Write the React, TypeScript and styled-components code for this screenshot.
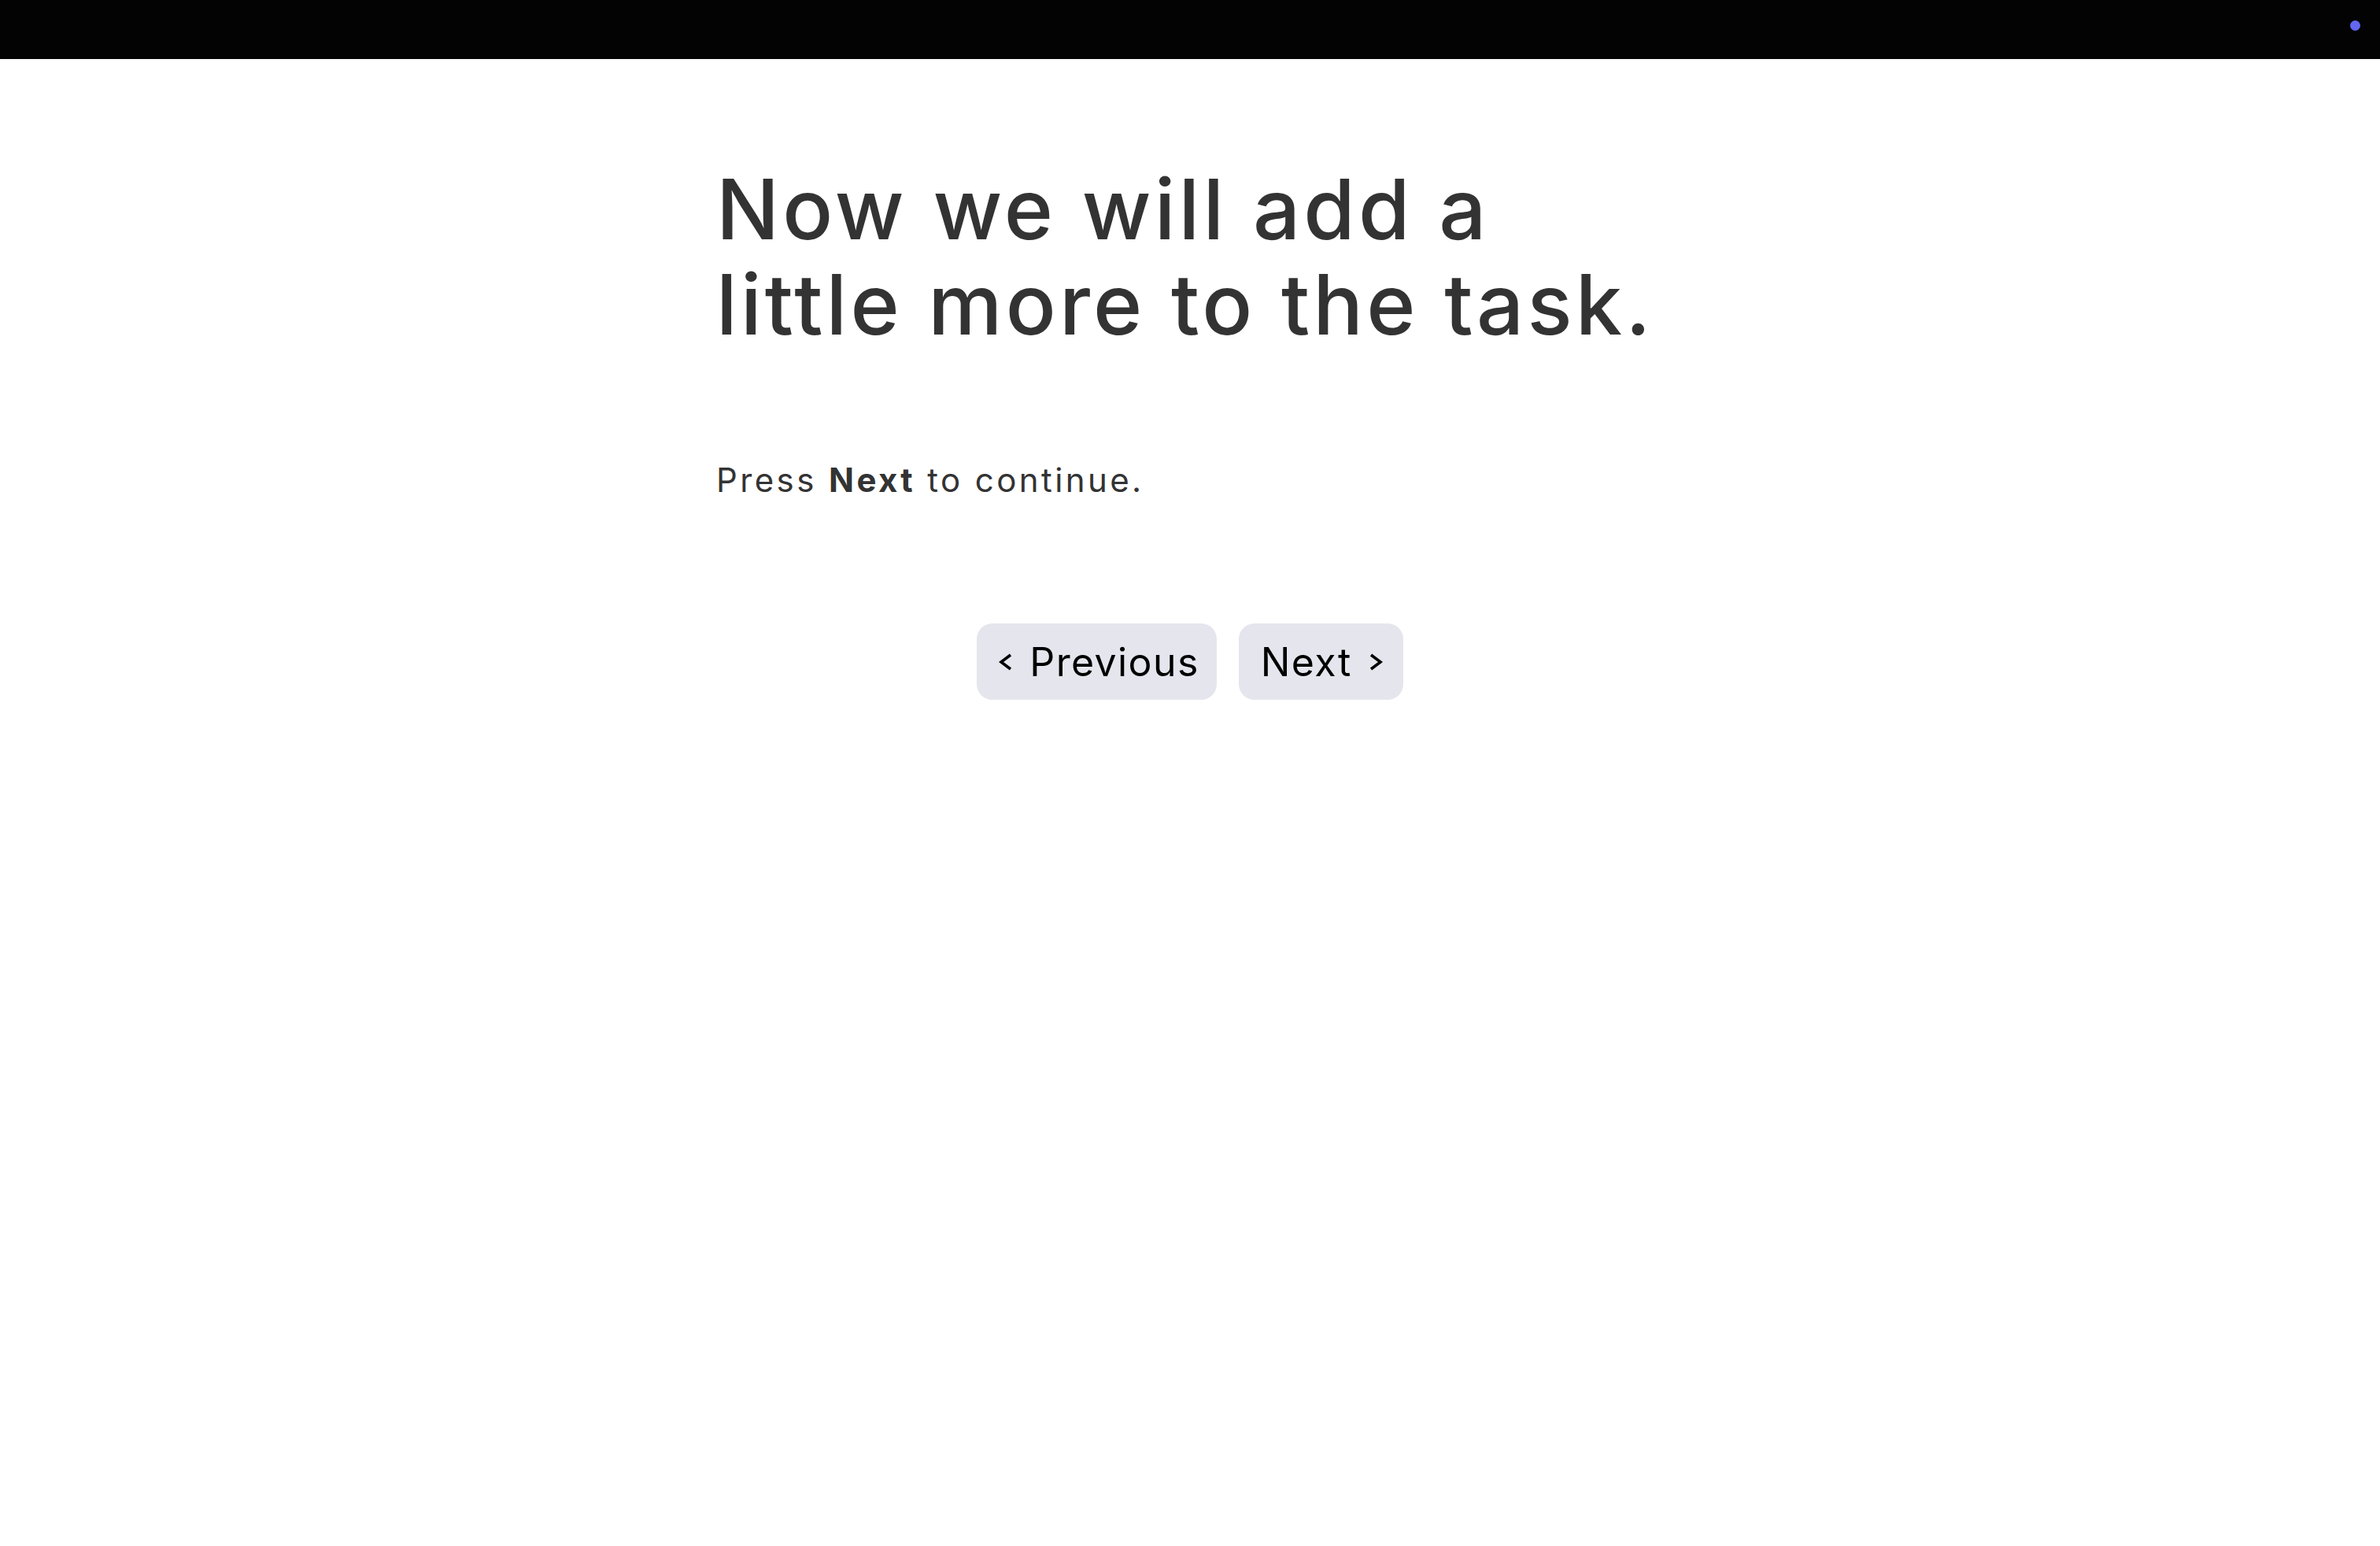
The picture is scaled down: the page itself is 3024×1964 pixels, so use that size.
import React from "react";
import styled, { createGlobalStyle } from "styled-components";

const GlobalStyle = createGlobalStyle`
  html, body {
    margin: 0;
    padding: 0;
    background: #ffffff;
  }
  body {
    font-family: Inter, "Noto Sans", "DejaVu Sans", sans-serif;
    color: #333333;
  }
`;

const TopBar = styled.header`
  height: 75px;
  background: #030303;
  display: flex;
  justify-content: flex-end;
  align-items: flex-start;
  padding: 26px 25px 0 0;
  box-sizing: border-box;
`;

const StatusDot = styled.span`
  width: 13px;
  height: 13px;
  border-radius: 50%;
  background: #6366f1;
`;

const Content = styled.main`
  max-width: 1204px;
  margin: 0 auto;
  padding-top: 130px;
`;

const Heading = styled.h1`
  margin: 0;
  font-size: 106px;
  line-height: 121px;
  font-weight: 500;
  letter-spacing: 4.2px;
  color: #333333;
`;

const Lead = styled.p`
  margin: 131px 0 0;
  font-size: 42px;
  line-height: 64px;
  font-weight: 400;
  letter-spacing: 3.4px;
  color: #333333;
  b {
    font-weight: 700;
  }
`;

const Nav = styled.nav`
  display: flex;
  justify-content: center;
  gap: 28px;
  margin-top: 150px;
`;

const NavButton = styled.button<{ $dir: "prev" | "next" }>`
  height: 97px;
  display: flex;
  align-items: center;
  gap: ${(p) => (p.$dir === "prev" ? "22px" : "22px")};
  padding: ${(p) => (p.$dir === "prev" ? "0 22px 0 28px" : "0 26px 0 28px")};
  border: none;
  border-radius: 20px;
  background: #e5e5ed;
  color: #000000;
  font-family: Inter, "Noto Sans", sans-serif;
  font-size: 50px;
  font-weight: 400;
  letter-spacing: 1.4px;
  cursor: pointer;
`;

const Chevron = styled.svg`
  width: 17px;
  height: 22px;
  flex: none;
`;

const ChevronIcon: React.FC<{ dir: "prev" | "next" }> = ({ dir }) => (
  <Chevron viewBox="0 0 17 22" aria-hidden="true">
    <path
      d={dir === "prev" ? "M15 2 L3 11 L15 20" : "M2 2 L14 11 L2 20"}
      fill="none"
      stroke="#000"
      strokeWidth={3.6}
      strokeLinejoin="miter"
    />
  </Chevron>
);

const App: React.FC = () => {
  return (
    <>
      <GlobalStyle />
      <TopBar>
        <StatusDot />
      </TopBar>
      <Content>
        <Heading>
          Now we will add a
          <br />
          little more to the task.
        </Heading>
        <Lead>
          Press <b>Next</b> to continue.
        </Lead>
        <Nav>
          <NavButton $dir="prev">
            <ChevronIcon dir="prev" />
            <span>Previous</span>
          </NavButton>
          <NavButton $dir="next">
            <span>Next</span>
            <ChevronIcon dir="next" />
          </NavButton>
        </Nav>
      </Content>
    </>
  );
};

export default App;
